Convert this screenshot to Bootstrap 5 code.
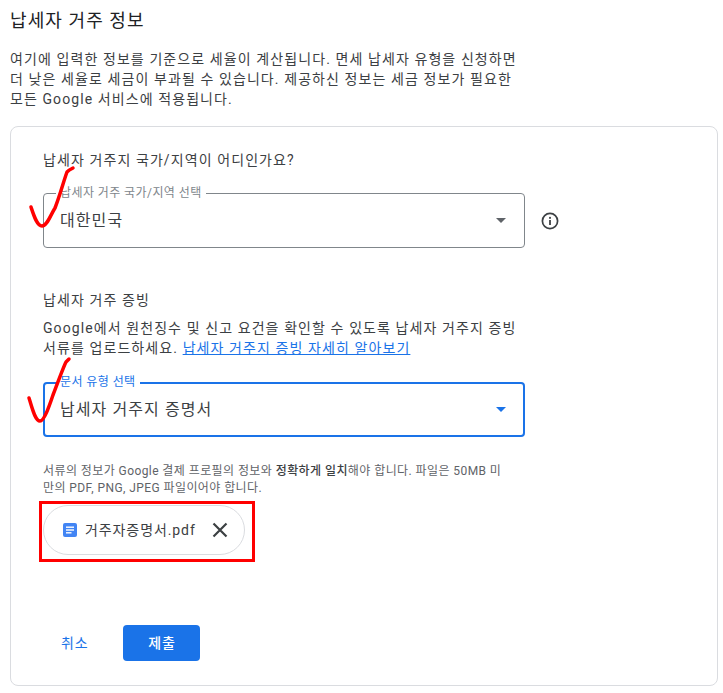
<!DOCTYPE html>
<html lang="ko"><head><meta charset="utf-8">
<link rel="stylesheet" href="https://cdn.jsdelivr.net/npm/bootstrap@5.3.0/dist/css/bootstrap.min.css">
<style>
html,body{height:693px;overflow:hidden;background:#fff}
body{font-family:Roboto,"Noto Sans CJK KR",sans-serif;color:#3c4043;position:relative;padding:10px 0 0 10px;letter-spacing:.068em}
.ttl{font-size:18px;line-height:22px;color:#202124;margin:0 0 17px}
.intro{font-size:14px;line-height:20px;width:530px;margin:0 0 17px;white-space:nowrap}
.panel{width:708px;height:560px;border:1px solid #dadce0;border-radius:8px;padding:23px 0 0 32px}
.qtext{font-size:14px;line-height:20px;margin:0 0 23px;color:#3c4043}
.fieldwrap{gap:15px}
.fbox{position:relative;width:482px;height:55px;border:1px solid #80868b;border-radius:4px;padding:0 16px;font-size:16px;color:#3c4043}
.fbox.on{border:2px solid #1a73e8;padding:0 15px}
.flabel{position:absolute;left:12px;top:-8px;background:#fff;padding:0 4px;font-size:12px;line-height:14px;color:#80868b;letter-spacing:.035em}
.fbox.on .flabel{left:11px;top:-9px;color:#1a73e8}
.caret{width:0;height:0;margin-right:2px;border-left:5px solid transparent;border-right:5px solid transparent;border-top:5px solid #5f6368}
.on .caret{border-top-color:#1a73e8}
.sec2{margin-top:42px}
.para{font-size:14px;line-height:19.5px;width:490px;margin:9px 0 24px;white-space:nowrap}
.para a{color:#1a73e8}
.hint{font-size:12px;line-height:17px;width:490px;margin:26px 0 8px;color:#5f6368;white-space:nowrap;letter-spacing:.035em}
.hint b{color:#3c4043;font-weight:500}
.chip{width:202px;height:50px;border:1px solid #dadce0;border-radius:25px;padding:0 16px 0 19px;font-size:14px;color:#3c4043;position:relative;letter-spacing:.065em}
.redbox{position:absolute;left:39px;top:501px;width:216px;height:61px;border:3px solid #f00}
.acts{margin-top:70px;padding-left:1px;gap:18px}
.cancel{font-size:14px;color:#1a73e8;background:none;border:0;padding:0 17px;height:36px;letter-spacing:.06em}
.submit{font-size:14px;font-weight:500;background:#1a73e8;color:#fff;border:0;border-radius:4px;width:77px;height:36px;padding:0;letter-spacing:.06em}
.tick{position:absolute;left:0;top:0;pointer-events:none}
</style></head><body>
<h1 class="ttl fw-normal">납세자 거주 정보</h1>
<p class="intro">여기에 입력한 정보를 기준으로 세율이 계산됩니다. 면세 납세자 유형을 신청하면<br>더 낮은 세율로 세금이 부과될 수 있습니다. 제공하신 정보는 세금 정보가 필요한<br>모든 Google 서비스에 적용됩니다.</p>
<div class="panel">
  <p class="qtext">납세자 거주지 국가/지역이 어디인가요?</p>
  <div class="d-flex align-items-center fieldwrap">
    <div class="fbox d-flex align-items-center justify-content-between">
      <span class="flabel">납세자 거주 국가/지역 선택</span><span>대한민국</span><span class="caret"></span>
    </div>
    <svg width="20" height="20" viewBox="0 0 20 20" fill="none"><circle cx="10" cy="10" r="7.6" stroke="#3c4043" stroke-width="1.7"/><rect x="9.1" y="9" width="1.8" height="5" fill="#3c4043"/><rect x="9.1" y="5.9" width="1.8" height="1.9" fill="#3c4043"/></svg>
  </div>
  <div class="sec2">
    <p class="qtext mb-0">납세자 거주 증빙</p>
    <p class="para">Google에서 원천징수 및 신고 요건을 확인할 수 있도록 납세자 거주지 증빙<br>서류를 업로드하세요. <a href="#">납세자 거주지 증빙 자세히 알아보기</a></p>
    <div class="fbox on d-flex align-items-center justify-content-between">
      <span class="flabel">문서 유형 선택</span><span>납세자 거주지 증명서</span><span class="caret"></span>
    </div>
    <p class="hint">서류의 정보가 Google 결제 프로필의 정보와 <b>정확하게 일치</b>해야 합니다. 파일은 50MB 미<br>만의 PDF, PNG, JPEG 파일이어야 합니다.</p>
    <div class="chip d-flex align-items-center">
      <svg class="me-2" width="14" height="14" viewBox="0 0 14 14"><rect x="0" y="0" width="14" height="14" rx="2" fill="#4285f4"/><rect x="3" y="3.5" width="8" height="1.4" fill="#fff"/><rect x="3" y="6.3" width="8" height="1.4" fill="#fff"/><rect x="3" y="9.1" width="5.5" height="1.4" fill="#fff"/></svg>
      <span>거주자증명서.pdf</span>
      <svg class="ms-auto" width="16" height="16" viewBox="0 0 16 16"><path d="M1.5 1.5 14.5 14.5M14.5 1.5 1.5 14.5" stroke="#3c4043" stroke-width="2.2"/></svg>
    </div>
    <div class="d-flex align-items-center acts">
      <button class="cancel">취소</button><button class="submit">제출</button>
    </div>
  </div>
</div>
<div class="redbox"></div>
<svg class="tick" width="100" height="430" viewBox="0 0 100 430" fill="none" stroke="#f00" stroke-width="3.5" stroke-linecap="round" stroke-linejoin="round">
  <path d="M31 207C34 216 37 226 42 226C47 226 50 216 55 208C60 195 64 180 67 172C69 170 71 169 73 168"/>
  <path d="M29 398C32 407 35 421 40 421C44 421 49 407 53 395C58 382 63 368 66 362L69 359"/>
</svg>
</body></html>
